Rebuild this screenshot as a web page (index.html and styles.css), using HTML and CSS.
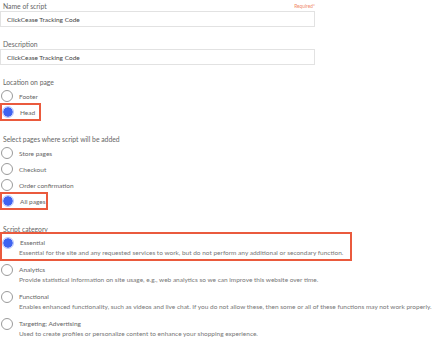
FILE: index.html
```html
<!DOCTYPE html>
<html>
<head>
<meta charset="utf-8">
<link rel="stylesheet" href="styles.css">
</head>
<body>
<div class="form">
  <div class="field">
    <div class="label-row"><span class="label">Name of script</span><span class="required">Required*</span></div>
    <div class="input">ClickCease Tracking Code</div>
  </div>
  <div class="field">
    <div class="label-row"><span class="label">Description</span></div>
    <div class="input">ClickCease Tracking Code</div>
  </div>

  <div class="group g-location">
    <div class="label group-label">Location on page</div>
    <div class="opt"><span class="radio"></span><span class="opt-text">Footer</span></div>
    <div class="opt hl hl-head"><span class="radio on"></span><span class="opt-text">Head</span></div>
  </div>

  <div class="group g-pages">
    <div class="label group-label">Select pages where script will be added</div>
    <div class="opt"><span class="radio"></span><span class="opt-text">Store pages</span></div>
    <div class="opt"><span class="radio"></span><span class="opt-text">Checkout</span></div>
    <div class="opt"><span class="radio"></span><span class="opt-text">Order confirmation</span></div>
    <div class="opt hl hl-all"><span class="radio on"></span><span class="opt-text">All pages</span></div>
  </div>

  <div class="group g-cat">
    <div class="label group-label cat-label">Script category</div>
    <div class="cat hl-cat">
      <div class="cat-row"><span class="radio on"></span><span class="opt-text">Essential</span></div>
      <div class="cat-desc">Essential for the site and any requested services to work, but do not perform any additional or secondary function.</div>
    </div>
    <div class="cat">
      <div class="cat-row"><span class="radio"></span><span class="opt-text">Analytics</span></div>
      <div class="cat-desc">Provide statistical information on site usage, e.g., web analytics so we can improve this website over time.</div>
    </div>
    <div class="cat">
      <div class="cat-row"><span class="radio"></span><span class="opt-text">Functional</span></div>
      <div class="cat-desc">Enables enhanced functionality, such as videos and live chat. If you do not allow these, then some or all of these functions may not work properly.</div>
    </div>
    <div class="cat">
      <div class="cat-row"><span class="radio"></span><span class="opt-text">Targeting; Advertising</span></div>
      <div class="cat-desc">Used to create profiles or personalize content to enhance your shopping experience.</div>
    </div>
  </div>
</div>
</body>
</html>
```
FILE: styles.css
```css
* { box-sizing: border-box; }
html, body { margin: 0; padding: 0; background: #fff; }
body {
  font-family: Lato, "Liberation Sans", sans-serif;
  font-size: 6.5px;
  color: #666;
  width: 444px;
  height: 346px;
  overflow: hidden;
}
.form { padding: 0; }
.field { width: 315px; margin-bottom: 11px; }
.label-row {
  display: flex;
  justify-content: space-between;
  align-items: center;
  height: 11px;
  padding-left: 3px;
}
.label { color: #666; font-size: 6.8px; }
.required { color: #f08a6a; font-size: 4.8px; }
.input {
  height: 16px;
  border: 1px solid #e2e2e2;
  display: flex;
  align-items: center;
  padding-left: 6px;
  color: #444;
}
.group-label { height: 12px; display: flex; align-items: center; padding-left: 3px; white-space: nowrap; }
.cat-label { height: 8px; }
.g-pages { margin-top: 13px; }
.g-cat { margin-top: 16px; }
.opt {
  display: flex;
  align-items: center;
  height: 16px;
  padding-left: 1px;
  white-space: nowrap;
}
.opt-text { margin-left: 6px; color: #666; white-space: nowrap; }
.radio {
  width: 12px;
  height: 12px;
  border-radius: 50%;
  border: 1px solid #9a9a9a;
  background: #fff;
  flex: none;
}
.radio.on {
  border: 1px solid #b9c7fb;
  background: radial-gradient(circle, #3f63f0 0 4.4px, #c9d4fc 4.9px);
}
.hl {
  outline: 2px solid #ea5a3d;
  outline-offset: -2px;
  height: 18px;
  margin: -1px 0;
  padding-left: 2px;
}
.hl-head { width: 41px; }
.hl-all { width: 48px; }
.cat { padding: 4px 0 2px 1px; height: 27px; }
.hl-cat {
  width: 352px;
  outline: 2px solid #ea5a3d;
  outline-offset: -2px;
  padding: 5px 0 2px 2px;
  height: 29px;
  margin-top: -1px;
  margin-bottom: -1px;
}
.cat-row { display: flex; align-items: center; height: 11px; }
.cat-desc { padding-left: 18px; height: 10px; line-height: 10px; color: #777; white-space: nowrap; }
.hl-cat .cat-desc { padding-left: 17px; }
```
